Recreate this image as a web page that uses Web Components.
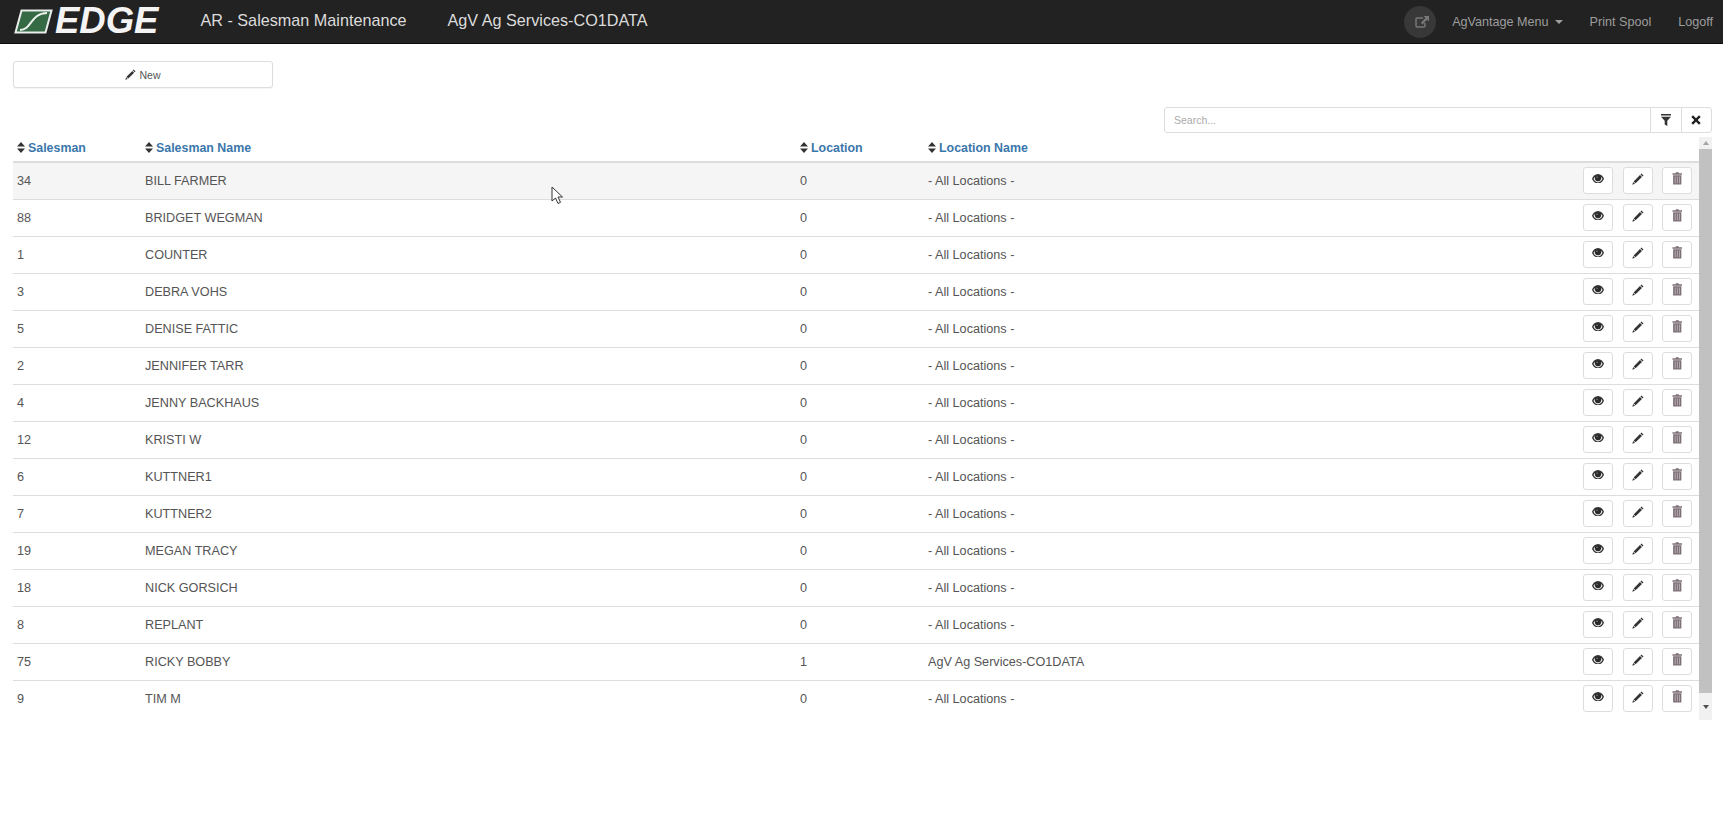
<!DOCTYPE html>
<html><head><meta charset="utf-8"><title>AR - Salesman Maintenance</title>
<style>
html,body{margin:0;padding:0;background:#fff;height:100%;overflow:hidden}
body{font-family:"Liberation Sans",Arial,sans-serif;color:#555}
</style></head>
<body>
<app-navbar></app-navbar>
<main-page></main-page>
<mouse-cursor></mouse-cursor>
<script>
const ICONS={
eye:'<svg viewBox="0 0 14 11" width="12" height="9.500"><path fill="#333" d="M7 0C3.600 0 1 2.600 0 5.500c1 2.900 3.600 5.500 7 5.500s6-2.600 7-5.500C13 2.600 10.400 0 7 0z"/><path fill="#e6e6e6" d="M1.700 5.600C2.600 8 4.700 9.800 7 9.800s4.400-1.800 5.300-4.200c-.5-.8-1.100-1.500-1.800-2A3.700 3.700 0 1 1 3.500 3.600c-.7.500-1.300 1.200-1.800 2z"/><circle cx="7" cy="4.800" r="3" fill="#2a2a2a"/><circle cx="5.900" cy="3.700" r=".8" fill="#8a8a8a"/></svg>',
pencil:'<svg viewBox="0 0 14 14" width="12" height="12"><path fill="#333" d="M11 .6 13.400 3 12.300 4.100 9.900 1.700zM9.300 2.400 11.600 4.700 4.200 12.100 1.900 9.800z"/><path fill="#333" d="M1.400 10.500 3.500 12.600.4 13.600z"/></svg>',
trash:'<svg viewBox="0 0 12 14" width="10.500" height="12.500"><path fill="#7d6f76" d="M4.300 0h3.400v1.200h3.800v1.700H.5V1.200h3.800zM1.300 3.700h9.400V14H1.300z"/><path fill="#c9c2c6" d="M3.200 5h.8v7.800h-.8zM5.600 5h.8v7.800h-.8zM8 5h.8v7.800H8z"/></svg>',
sort:'<svg viewBox="0 0 8 11" width="8" height="11"><path fill="#333" d="M4 0 8 4.600H0zM0 6.400h8L4 11z"/></svg>',
filter:'<svg viewBox="0 0 10 12" width="10" height="12"><path fill="#333" d="M0 0h10v1.500H0zM0 2.700h10L6.300 6.800V12L3.700 10.400V6.800z"/></svg>',
times:'<svg viewBox="0 0 10 10" width="10" height="10"><path fill="#222" d="M2 .3 5 3.300 8 .3 9.700 2 6.700 5 9.700 8 8 9.700 5 6.700 2 9.700.3 8 3.300 5 .3 2z"/></svg>',
share:'<svg viewBox="0 0 14 12" width="14" height="12"><path fill="none" stroke="#777" stroke-width="1.500" d="M8 2H2.200A1.200 1.200 0 0 0 1 3.200v6.600A1.200 1.200 0 0 0 2.200 11h6.600A1.200 1.200 0 0 0 10 9.800V7"/><path fill="#777" d="M8.500 0H14v5.500L12.200 3.700 7.500 8.400 5.800 6.700 10.500 2z"/></svg>'
};
class BaseEl extends HTMLElement{
  render(html){ if(!this.shadowRoot) this.attachShadow({mode:'open'}); this.shadowRoot.innerHTML=html; }
}
class EdgeLogo extends BaseEl{connectedCallback(){this.render(`<style>
:host{display:flex;align-items:center;gap:2px}
svg{display:block}
span{font:italic 700 36.500px/1 "Liberation Sans",Arial,sans-serif;color:#f4f4f4}
</style><svg viewBox="0 0 39 25" width="39" height="25"><path d="M7.500 1.500H37.500L31.500 23.500H1.500z" fill="#356a45" stroke="#e8ecea" stroke-width="2"/><path d="M6 21C18 21 16 4.500 33 4" fill="none" stroke="#eef2ef" stroke-width="2"/></svg><span>EDGE</span>`);}}
class NavLink extends BaseEl{connectedCallback(){this.render(`<style>
:host{display:inline-flex;align-items:center;gap:6px;font-size:12.600px;color:#9d9d9d;white-space:nowrap}
i{display:${this.hasAttribute('caret')?'block':'none'};width:0;height:0;border:4px solid transparent;border-top-color:#9d9d9d;border-bottom:0}
</style><slot></slot><i></i>`);}}
class AppNavbar extends BaseEl{connectedCallback(){this.render(`<style>
:host{display:flex;align-items:center;height:43px;background:#222;border-bottom:1px solid #0b0b0b;padding-left:14px;padding-right:10px;color:#ddd}
.title{font-size:16.200px;margin-left:42px;margin-bottom:2px;white-space:nowrap;color:#dcdcdc}
.title+.title{margin-left:41px}
.right{margin-left:auto;display:flex;align-items:center}
.circle{width:32px;height:32px;border-radius:50%;background:#383838;display:flex;align-items:center;justify-content:center;margin-right:16px;padding-left:3px;box-sizing:border-box}
nav-link{margin-right:27px}
nav-link:last-child{margin-right:0}
</style><edge-logo></edge-logo><span class="title">AR - Salesman Maintenance</span><span class="title">AgV Ag Services-CO1DATA</span>
<div class="right"><div class="circle">${ICONS.share}</div><nav-link caret>AgVantage Menu</nav-link><nav-link>Print Spool</nav-link><nav-link>Logoff</nav-link></div>`);}}
class NewButton extends BaseEl{connectedCallback(){this.render(`<style>
:host{display:flex;align-items:center;justify-content:center;gap:3px;box-sizing:border-box;width:260px;height:27px;border:1px solid #ddd;border-radius:3px;background:#fff;font-size:10.500px;color:#555;box-shadow:0 1px 1px rgba(0,0,0,.05)}
</style>${ICONS.pencil.replace('width="12" height="12"','width="11" height="11"')}<slot></slot>`);}}
class SearchBar extends BaseEl{connectedCallback(){this.render(`<style>
:host{display:flex;box-sizing:border-box;width:548px;height:26px;border:1px solid #ddd;border-radius:3px;background:#fff}
.q{flex:1;padding-left:9px;font-size:10.500px;color:#aaa;line-height:24px}
.b{width:29.500px;border-left:1px solid #ddd;display:flex;align-items:center;justify-content:center}
</style><div class="q">Search...</div><div class="b">${ICONS.filter}</div><div class="b">${ICONS.times}</div>`);}}
class SortHead extends BaseEl{connectedCallback(){this.render(`<style>
:host{display:flex;align-items:center;gap:3px;font-size:12.400px;font-weight:700;color:#3a77ab;white-space:nowrap;padding-bottom:3px}
svg{display:block;flex:none}
</style>${ICONS.sort}<slot></slot>`);}}
class IconButton extends BaseEl{connectedCallback(){this.render(`<style>
:host{display:flex;align-items:center;justify-content:center;box-sizing:border-box;width:30px;height:27px;border:1px solid #ddd;border-radius:3px;background:#fff}
svg{display:block;margin-top:-4px}
</style>${ICONS[this.getAttribute('icon')]}`);}}
class SalesRow extends BaseEl{connectedCallback(){const a=n=>this.getAttribute(n);this.render(`<style>
:host{display:grid;grid-template-columns:128px 655px 128px 1fr auto;align-items:center;height:36px;border-bottom:1px solid #ddd;font-size:12.650px;color:#555;background:${this.hasAttribute('hover')?'#f5f5f5':'#fff'}}
:host(:last-child){border-bottom:0}
div{padding-left:4px;white-space:nowrap;margin-top:-1px}
.acts{display:flex;gap:9.500px;padding:0 7px 0 0;margin-top:-1px}
</style><div>${a('no')}</div><div>${a('name')}</div><div>${a('loc')}</div><div>${a('locname')}</div>
<div class="acts"><icon-button icon="eye"></icon-button><icon-button icon="pencil"></icon-button><icon-button icon="trash"></icon-button></div>`);}}
class ScrollTrack extends BaseEl{connectedCallback(){this.render(`<style>
:host{display:flex;flex-direction:column;width:13px;background:#f1f1f1;flex:none}
.a{height:12px;display:flex;align-items:center;justify-content:center}
.t{flex:1;background:#c1c1c1}
i{width:0;height:0;border:3.500px solid transparent}
.up{border-bottom:4px solid #a3a3a3;border-top:0}
.dn{border-top:4px solid #505050;border-bottom:0}
.top{height:12px}.bot{height:27px}
</style><div class="a top"><i class="up"></i></div><div class="t"></div><div class="a bot"><i class="dn"></i></div>`);}}
class SalesTable extends BaseEl{connectedCallback(){
const rows=[[34,'BILL FARMER'],[88,'BRIDGET WEGMAN'],[1,'COUNTER'],[3,'DEBRA VOHS'],[5,'DENISE FATTIC'],[2,'JENNIFER TARR'],[4,'JENNY BACKHAUS'],[12,'KRISTI W'],[6,'KUTTNER1'],[7,'KUTTNER2'],[19,'MEGAN TRACY'],[18,'NICK GORSICH'],[8,'REPLANT'],[75,'RICKY BOBBY'],[9,'TIM M']];
this.render(`<style>
:host{display:flex;height:583px}
.body{flex:1;min-width:0}
.head{display:grid;grid-template-columns:128px 655px 128px 1fr;align-items:center;height:24px;border-bottom:2px solid #ddd}
.head sort-head{padding-left:4px}
</style><div class="body"><div class="head"><sort-head>Salesman</sort-head><sort-head>Salesman Name</sort-head><sort-head>Location</sort-head><sort-head>Location Name</sort-head></div>
${rows.map(([n,m],i)=>`<sales-row no="${n}" name="${m}" loc="${n==75?1:0}" locname="${n==75?'AgV Ag Services-CO1DATA':'- All Locations -'}"${i==0?' hover':''}></sales-row>`).join('')}</div><scroll-track></scroll-track>`);}}
class MainPage extends BaseEl{connectedCallback(){this.render(`<style>
:host{display:flex;flex-direction:column;padding:17px 11px 0 13px}
.tools{display:flex;justify-content:flex-end;margin-top:19px;margin-bottom:4px}
</style><new-button>New</new-button><div class="tools"><search-bar></search-bar></div><sales-table></sales-table>`);}}
class MouseCursor extends BaseEl{connectedCallback(){this.render(`<style>
:host{position:absolute;left:551px;top:186px;display:block;width:12px;height:19px}
svg{display:block}
</style><svg viewBox="0 0 12 19" width="12" height="19"><path d="M1 1V15L4.500 12 7 17.500 9.500 16.300 7 11H11.500z" fill="#fff" stroke="#333" stroke-width="1"/></svg>`);}}
[['edge-logo',EdgeLogo],['nav-link',NavLink],['app-navbar',AppNavbar],['new-button',NewButton],['search-bar',SearchBar],['sort-head',SortHead],['icon-button',IconButton],['sales-row',SalesRow],['scroll-track',ScrollTrack],['sales-table',SalesTable],['main-page',MainPage],['mouse-cursor',MouseCursor]].forEach(([n,c])=>customElements.define(n,c));
</script>
</body></html>
